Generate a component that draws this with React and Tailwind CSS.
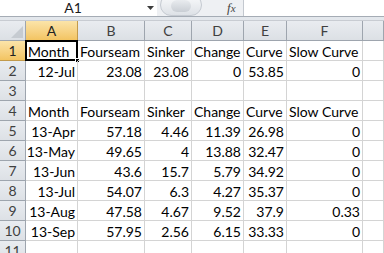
import React from 'react';

const COLS = ['A', 'B', 'C', 'D', 'E', 'F', ''];
const WIDTHS = 'grid-cols-[26px_52px_67px_47px_52px_43px_76px_1fr]';

const ROWS = [
  { n: 1, cells: [['Month', 'l'], ['Fourseam', 'l'], ['Sinker', 'l'], ['Change', 'l'], ['Curve', 'l'], ['Slow Curve', 'l']] },
  { n: 2, cells: [['12-Jul', 'r'], ['23.08', 'r'], ['23.08', 'r'], ['0', 'r'], ['53.85', 'r'], ['0', 'r']] },
  { n: 3, cells: [] },
  { n: 4, cells: [['Month', 'l'], ['Fourseam', 'l'], ['Sinker', 'l'], ['Change', 'l'], ['Curve', 'l'], ['Slow Curve', 'l']] },
  { n: 5, cells: [['13-Apr', 'r'], ['57.18', 'r'], ['4.46', 'r'], ['11.39', 'r'], ['26.98', 'r'], ['0', 'r']] },
  { n: 6, cells: [['13-May', 'r'], ['49.65', 'r'], ['4', 'r'], ['13.88', 'r'], ['32.47', 'r'], ['0', 'r']] },
  { n: 7, cells: [['13-Jun', 'r'], ['43.6', 'r'], ['15.7', 'r'], ['5.79', 'r'], ['34.92', 'r'], ['0', 'r']] },
  { n: 8, cells: [['13-Jul', 'r'], ['54.07', 'r'], ['6.3', 'r'], ['4.27', 'r'], ['35.37', 'r'], ['0', 'r']] },
  { n: 9, cells: [['13-Aug', 'r'], ['47.58', 'r'], ['4.67', 'r'], ['9.52', 'r'], ['37.9', 'r'], ['0.33', 'r']] },
  { n: 10, cells: [['13-Sep', 'r'], ['57.95', 'r'], ['2.56', 'r'], ['6.15', 'r'], ['33.33', 'r'], ['0', 'r']] },
  { n: 11, cells: [] },
];

function Cell({ value, align, active }) {
  return (
    <div
      className={
        'relative h-5 border-r border-b border-[#d4d4d4] flex items-end pb-[1px] overflow-visible whitespace-nowrap ' +
        (align === 'r' ? 'justify-end pr-[2px]' : 'justify-start pl-[2px]')
      }
    >
      {value}
      {active && (
        <>
          <div className="absolute -left-[1px] -top-[1px] right-[-1px] bottom-[-1px] border-2 border-black pointer-events-none" />
          <div className="absolute right-[-3px] bottom-[-3px] w-[5px] h-[5px] bg-black border border-white" />
        </>
      )}
    </div>
  );
}

export default function App() {
  return (
    <div className="w-[384px] h-[253px] overflow-hidden bg-white text-black font-['Lato','Liberation_Sans',sans-serif] text-[14px] leading-none">
      {/* Formula bar */}
      <div className="flex h-[17px] border-b border-[#a5acb5] bg-white">
        <div className="w-[143px] flex items-center justify-center text-[14px] text-[#1b1b1b] pl-[3px]">A1</div>
        <div className="w-[14px] flex items-center justify-center">
          <svg width="7" height="4" viewBox="0 0 7 4"><path d="M0 0h7L3.5 4z" fill="#3c3c3c" /></svg>
        </div>
        <div className="w-[87px] bg-[#eef0f3] flex items-start relative border-r border-[#c3c8cf]">
          <div className="ml-[3px] -mt-[6px] w-[42px] h-[22px] rounded-full border border-[#c5cad1] bg-gradient-to-b from-[#fafbfc] to-[#dde1e6] flex items-center justify-center">
            <div className="w-[20px] h-[12px] rounded-full bg-gradient-to-b from-[#e9ecef] to-[#c9ced4] mt-[2px]" />
          </div>
          <span className="absolute left-[70px] top-[1px] font-['Liberation_Serif',serif] italic text-[13px] text-[#444]">f<span className="text-[11px]">x</span></span>
        </div>
        <div className="flex-1 bg-white" />
      </div>
      <div className="h-[4px] bg-[#e3e7ec] border-b border-[#c8ccd2]" />

      {/* Grid */}
      <div className={'grid ' + WIDTHS}>
        {/* header row */}
        <div className="h-[20px] border-r border-b border-[#9ea5ae] bg-gradient-to-b from-[#e9ecf0] to-[#dce0e5] flex items-end justify-end p-[2px]">
          <svg width="12" height="12" viewBox="0 0 12 12"><path d="M12 0V12H0z" fill="#c6cbd1" /></svg>
        </div>
        {COLS.map((c, i) => (
          <div
            key={i}
            className={
              'h-[20px] border-r border-b flex items-center justify-center text-[14px] ' +
              (c === 'A'
                ? 'bg-gradient-to-b from-[#fbe4a9] to-[#f3c461] border-[#c29a4c] text-[#222]'
                : 'bg-gradient-to-b from-[#e9ecf0] to-[#dce0e5] border-[#9ea5ae] text-[#404040]')
            }
          >
            {c}
          </div>
        ))}

        {ROWS.map((row) => (
          <React.Fragment key={row.n}>
            <div
              className={
                'h-5 border-r border-b flex items-center justify-center text-[14px] ' +
                (row.n === 1
                  ? 'bg-gradient-to-b from-[#fbe4a9] to-[#f3c461] border-[#c29a4c] text-[#222]'
                  : 'bg-gradient-to-b from-[#e9ecf0] to-[#dde1e6] border-[#9ea5ae] text-[#404040]')
              }
            >
              {row.n}
            </div>
            {COLS.map((c, i) => {
              const cell = row.cells[i];
              return (
                <Cell
                  key={i}
                  value={cell ? cell[0] : ''}
                  align={cell ? cell[1] : 'l'}
                  active={row.n === 1 && i === 0}
                />
              );
            })}
          </React.Fragment>
        ))}
      </div>
    </div>
  );
}
